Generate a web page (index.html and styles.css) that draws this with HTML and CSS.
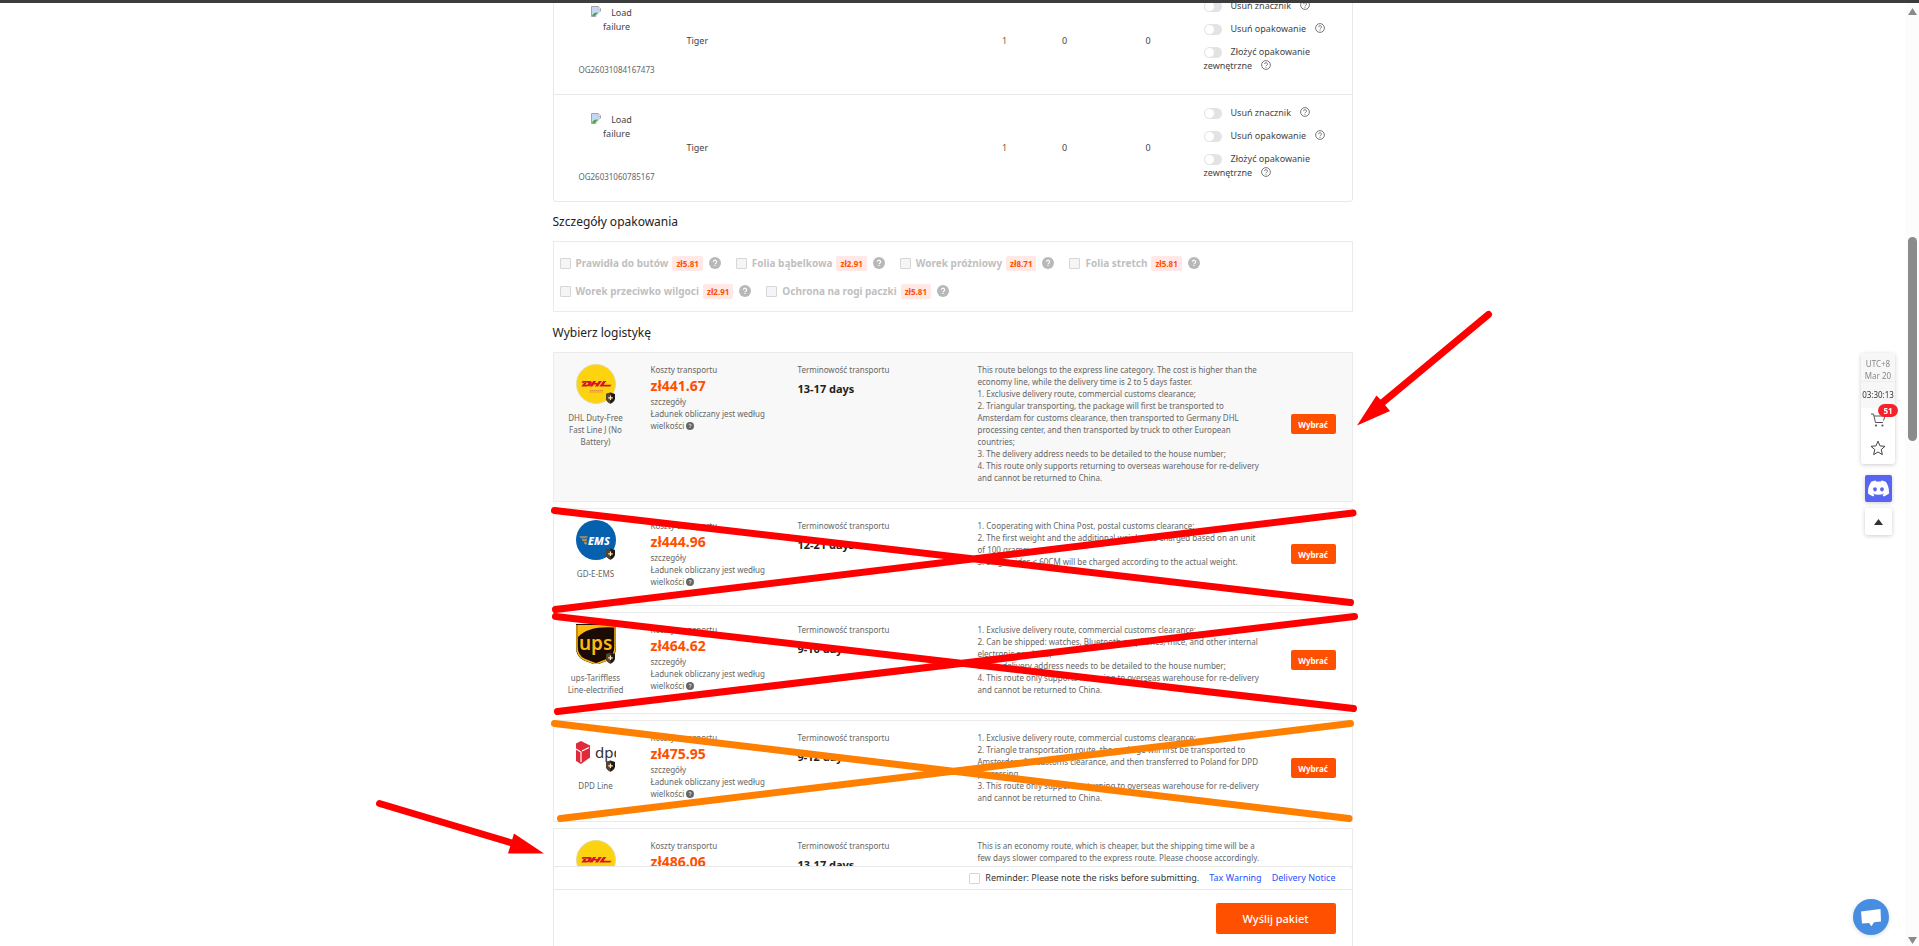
FILE: index.html
```
<!DOCTYPE html>
<html lang="pl">
<head>
  <meta charset="UTF-8" />
  <title>Wyślij pakiet</title>
  <link rel="stylesheet" href="styles.css">
</head>
<body>

<!-- shared icons -->
<svg class="sprite" aria-hidden="true">
  <symbol id="help" viewBox="0 0 10 10">
    <circle cx="5" cy="5" r="4.4" fill="none" stroke="#555" stroke-width="0.8" />
    <path d="M3.6 4.1a1.4 1.4 0 1 1 2.1 1.2c-.5.3-.7.5-.7 1M5 7v.8" fill="none" stroke="#555" stroke-width="0.8" />
  </symbol>
  <symbol id="help-full" viewBox="0 0 12 12">
    <circle cx="6" cy="6" r="6" fill="currentColor" />
    <path d="M4.4 4.8a1.6 1.6 0 1 1 2.4 1.4c-.6.3-.8.5-.8 1M6 8v1.1" fill="none" stroke="#fff" stroke-width="1.2" />
  </symbol>
  <symbol id="shield" viewBox="0 0 10 12">
    <path d="M5 0.5 9.5 2v4.200c0 2.600-2 4.300-4.500 5.500C2.500 10.500.5 8.800.5 6.200V2z" fill="#1d1a18" />
    <path d="M5 .5.5 2v4.200c0 2.600 2 4.300 4.500 5.500z" fill="#55452f" />
    <path d="M5 3.500v4.600M2.700 5.800h4.600" stroke="#ffe9bf" stroke-width="1.200" />
  </symbol>
  <symbol id="broken" viewBox="0 0 10 11">
    <path d="M.5.5h6.500l2.500 2.500v7.500h-9z" fill="#c6d6f5" stroke="#a5a5a5" />
    <path d="M7 0v3h3z" fill="#fff" stroke="#a5a5a5" stroke-width=".6" />
    <path d="M1 10c1-3 3.500-4 6-3.500L4 10z" fill="#4ba83a" />
    <path d="M10 5 4.500 11H10z" fill="#fff" />
  </symbol>
  <symbol id="dhl" viewBox="0 0 40 40">
    <circle cx="20" cy="20" r="19.500" fill="#fdd20f" stroke="#e3d9a0" />
    <g fill="#d8122d" transform="translate(0 17)">
      <path d="M6.500 0H14q2.500.2 1.500 2.700Q14.300 5.300 11 5.500H5.300L7.800 2h2.700L9.300 3.800h1.500q1-.2 1.400-1 .3-1-.7-1.100H5.500z" />
      <path d="M17.200 0h3.100l-1.400 2h2.500l1.400-2h3.100l-3.900 5.500h-3.100l1.500-2.100h-2.500l-1.500 2.100h-3.100z" />
      <path d="M27.200 0h3.100l-2.600 3.700h7.800l-1.300 1.800H23.300z" />
    </g>
    <path d="M14 26.500h13M13.500 28h13" stroke="#e28a3c" stroke-width="1" stroke-dasharray="1.500 .4" />
  </symbol>
</svg>

<div class="top-line"></div>

<main class="page">
  <table class="goods">
    <colgroup><col class="c-img"><col class="c-name"><col class="c-qty"><col class="c-qty"><col class="c-sum"><col class="c-opt"></colgroup>
    <tr>
      <td class="goods-img"><div class="thumb"><svg><use href="#broken" /></svg>Load failure</div><div class="order">OG26031084167473</div></td>
      <td class="goods-name">Tiger</td>
      <td class="brown">1</td>
      <td>0</td>
      <td>0</td>
      <td class="goods-opt">
        <div><label><input type="checkbox" class="switch">Usuń znacznik</label><svg class="q"><use href="#help" /></svg></div>
        <div><label><input type="checkbox" class="switch">Usuń opakowanie</label><svg class="q"><use href="#help" /></svg></div>
        <div><label><input type="checkbox" class="switch">Złożyć opakowanie zewnętrzne</label><svg class="q"><use href="#help" /></svg></div>
      </td>
    </tr>
    <tr>
      <td class="goods-img"><div class="thumb"><svg><use href="#broken" /></svg>Load failure</div><div class="order">OG26031060785167</div></td>
      <td class="goods-name">Tiger</td>
      <td class="brown">1</td>
      <td>0</td>
      <td>0</td>
      <td class="goods-opt">
        <div><label><input type="checkbox" class="switch">Usuń znacznik</label><svg class="q"><use href="#help" /></svg></div>
        <div><label><input type="checkbox" class="switch">Usuń opakowanie</label><svg class="q"><use href="#help" /></svg></div>
        <div><label><input type="checkbox" class="switch">Złożyć opakowanie zewnętrzne</label><svg class="q"><use href="#help" /></svg></div>
      </td>
    </tr>
  </table>

  <h2>Szczegóły opakowania</h2>
  <div class="packing">
    <div class="pack"><label><input type="checkbox" class="box" disabled>Prawidła do butów</label><b>zł5.81</b><svg><use href="#help-full" /></svg></div>
    <div class="pack"><label><input type="checkbox" class="box" disabled>Folia bąbelkowa</label><b>zł2.91</b><svg><use href="#help-full" /></svg></div>
    <div class="pack"><label><input type="checkbox" class="box" disabled>Worek próżniowy</label><b>zł8.71</b><svg><use href="#help-full" /></svg></div>
    <div class="pack"><label><input type="checkbox" class="box" disabled>Folia stretch</label><b>zł5.81</b><svg><use href="#help-full" /></svg></div>
    <div class="pack"><label><input type="checkbox" class="box" disabled>Worek przeciwko wilgoci</label><b>zł2.91</b><svg><use href="#help-full" /></svg></div>
    <div class="pack"><label><input type="checkbox" class="box" disabled>Ochrona na rogi paczki</label><b>zł5.81</b><svg><use href="#help-full" /></svg></div>
  </div>

  <h2>Wybierz logistykę</h2>
  <div class="lines">
    <div class="line active">
      <div class="carrier">
        <div class="logo"><svg><use href="#dhl" /></svg><svg class="shield"><use href="#shield" /></svg></div>
        DHL Duty-Free Fast Line J (No Battery)
      </div>
      <div class="cost">
        <div>Koszty transportu</div>
        <div class="price">zł441.67</div>
        <div>szczegóły</div>
        <div>Ładunek obliczany jest według wielkości <svg><use href="#help-full" /></svg></div>
      </div>
      <div class="time"><div>Terminowość transportu</div><div class="days">13-17 days</div></div>
      <div class="desc">
        <p>This route belongs to the express line category. The cost is higher than the economy line, while the delivery time is 2 to 5 days faster.</p>
        <p>1. Exclusive delivery route, commercial customs clearance;</p>
        <p>2. Triangular transporting, the package will first be transported to Amsterdam for customs clearance, then transported to Germany DHL processing center, and then transported by truck to other European countries;</p>
        <p>3. The delivery address needs to be detailed to the house number;</p>
        <p>4. This route only supports returning to overseas warehouse for re-delivery and cannot be returned to China.</p>
      </div>
      <button class="choose">Wybrać</button>
    </div>

    <div class="line">
      <div class="carrier">
        <div class="logo">
          <svg viewBox="0 0 40 40">
            <circle cx="20" cy="20" r="20" fill="#0560ae" />
            <path d="M3 16h9l-1.500 2.500H5zM6 19.500h5l-1 2H7.500zM8 22.500h3l-1 3z" fill="#8c8577" />
            <path d="M6 20h5M8 23h3" stroke="#f39b2d" stroke-width="1" />
            <text x="12" y="25" font-size="11" font-weight="800" font-style="italic" fill="#fff">EMS</text>
          </svg>
          <svg class="shield"><use href="#shield" /></svg>
        </div>
        GD-E-EMS
      </div>
      <div class="cost">
        <div>Koszty transportu</div>
        <div class="price">zł444.96</div>
        <div>szczegóły</div>
        <div>Ładunek obliczany jest według wielkości <svg><use href="#help-full" /></svg></div>
      </div>
      <div class="time"><div>Terminowość transportu</div><div class="days">12-21 days</div></div>
      <div class="desc">
        <p>1. Cooperating with China Post, postal customs clearance;</p>
        <p>2. The first weight and the additional weight are charged based on an unit of 100 grams;</p>
        <p>3. Single sides &lt; 60CM will be charged according to the actual weight.</p>
      </div>
      <button class="choose">Wybrać</button>
    </div>

    <div class="line">
      <div class="carrier">
        <div class="logo">
          <svg viewBox="0 0 40 40">
            <path d="M0 0h40v23q0 10-8 13.500L20 41 8 36.500Q0 33 0 23z" fill="#1c0a04" />
            <path d="M2 13Q12 2 38 3.500V1H2z" fill="#fdb913" />
            <path d="M1 1v22q0 9 7.500 12.500L20 40l11.500-4.500Q39 32 39 23V1" fill="none" stroke="#fdb913" stroke-width="1.500" />
            <text x="3" y="26" font-size="19" font-weight="600" fill="#fdb913">ups</text>
          </svg>
          <svg class="shield"><use href="#shield" /></svg>
        </div>
        ups-Tariffless Line-electrified
      </div>
      <div class="cost">
        <div>Koszty transportu</div>
        <div class="price">zł464.62</div>
        <div>szczegóły</div>
        <div>Ładunek obliczany jest według wielkości <svg><use href="#help-full" /></svg></div>
      </div>
      <div class="time"><div>Terminowość transportu</div><div class="days">9-16 days</div></div>
      <div class="desc">
        <p>1. Exclusive delivery route, commercial customs clearance;</p>
        <p>2. Can be shipped: watches, Bluetooth earphones, mice, and other internal electronic products;</p>
        <p>3. The delivery address needs to be detailed to the house number;</p>
        <p>4. This route only supports returning to overseas warehouse for re-delivery and cannot be returned to China.</p>
      </div>
      <button class="choose">Wybrać</button>
    </div>

    <div class="line">
      <div class="carrier">
        <div class="logo">
          <svg viewBox="0 0 40 40">
            <path d="M0 11.500 5 9l9 4.500v12L5 32l-5-3z" fill="#e02b3c" />
            <path d="M0 17l5 3v10M6 19l7-3.500" fill="none" stroke="#fff" stroke-width="1.200" />
            <text x="19" y="26" font-size="15" fill="#35312f">dpd</text>
          </svg>
          <svg class="shield"><use href="#shield" /></svg>
        </div>
        DPD Line
      </div>
      <div class="cost">
        <div>Koszty transportu</div>
        <div class="price">zł475.95</div>
        <div>szczegóły</div>
        <div>Ładunek obliczany jest według wielkości <svg><use href="#help-full" /></svg></div>
      </div>
      <div class="time"><div>Terminowość transportu</div><div class="days">9-12 days</div></div>
      <div class="desc">
        <p>1. Exclusive delivery route, commercial customs clearance;</p>
        <p>2. Triangle transportation route, the package will first be transported to Amsterdam for customs clearance, and then transferred to Poland for DPD processing.</p>
        <p>3. This route only supports returning to overseas warehouse for re-delivery and cannot be returned to China.</p>
      </div>
      <button class="choose">Wybrać</button>
    </div>

    <div class="line">
      <div class="carrier">
        <div class="logo"><svg><use href="#dhl" /></svg></div>
      </div>
      <div class="cost">
        <div>Koszty transportu</div>
        <div class="price">zł486.06</div>
      </div>
      <div class="time"><div>Terminowość transportu</div><div class="days">13-17 days</div></div>
      <div class="desc">
        <p>This is an economy route, which is cheaper, but the shipping time will be a few days slower compared to the express route. Please choose accordingly.</p>
      </div>
    </div>
  </div>

  <!-- hand drawn marks over the list -->
  <svg class="marks" viewBox="553 0 800 946" aria-hidden="true">
    <g stroke="#f00" stroke-width="7" stroke-linecap="round">
      <path d="M554.500 510.500 1350.500 602.500M1353 513 555.500 609.500" />
      <path d="M555.500 616.500 1353.500 708.500M1354.500 616.500 557.500 711.500" />
      <path d="M1488.500 314.500 1382 403M379.500 803.500 512 843" />
    </g>
    <path d="M554.500 723.500 1349 818.500M1350.500 723.500 560.500 818.500" stroke="#ff8000" stroke-width="7" stroke-linecap="round" />
    <path d="M1357 425.500 1376.500 395.500 1382 401 1385 405 1390 411zM544 853.500 514 833.500 508 853.500z" fill="#f00" />
  </svg>
</main>

<footer class="submit-bar">
  <div class="reminder">
    <label><input type="checkbox" class="box">Reminder: Please note the risks before submitting.</label>
    <a href="#">Tax Warning</a>
    <a href="#">Delivery Notice</a>
  </div>
  <div class="submit"><button>Wyślij pakiet</button></div>
</footer>

<aside class="side">
  <div class="side-card">
    <div class="zone">UTC+8<br>Mar 20</div>
    <div class="clock">03:30:13</div>
    <button class="cart" aria-label="Koszyk">
      <svg viewBox="0 0 16 16"><path d="M1 2h2.500l2 8.500h7.500M4 4h11l-1.500 4.500M7 10.500h6" fill="none" stroke="#555" /><circle cx="6" cy="13.500" r="1.100" fill="#555" /><circle cx="12.500" cy="13.500" r="1.100" fill="#555" /></svg>
      <span class="count">51</span>
    </button>
    <button class="star" aria-label="Ulubione">
      <svg viewBox="0 0 16 16"><path d="M8 1.200 10 5.900l5 .4-3.800 3.300 1.200 5L8 12l-4.400 2.600 1.200-5L1 6.300l5-.4z" fill="none" stroke="#444" stroke-linejoin="round" /></svg>
    </button>
  </div>
  <a href="#" class="discord" aria-label="Discord"><svg viewBox="0 0 24 24"><path fill="#fff" d="M20.317 4.370a19.800 19.800 0 0 0-4.885-1.515.074.074 0 0 0-.079.037c-.211.375-.445.865-.608 1.250-1.845-.276-3.680-.276-5.487 0-.164-.393-.406-.874-.618-1.250a.077.077 0 0 0-.079-.037 19.700 19.700 0 0 0-4.885 1.515.070.070 0 0 0-.032.028C.533 9.046-.319 13.580.099 18.058a.082.082 0 0 0 .031.056c2.053 1.508 4.041 2.423 5.993 3.030a.078.078 0 0 0 .084-.028c.462-.630.873-1.295 1.226-1.994a.076.076 0 0 0-.042-.106c-.653-.248-1.274-.550-1.872-.892a.077.077 0 0 1-.008-.128c.126-.094.252-.192.372-.291a.074.074 0 0 1 .078-.011c3.928 1.793 8.180 1.793 12.061 0a.074.074 0 0 1 .079.010c.120.099.246.198.373.292a.077.077 0 0 1-.007.128 12.300 12.300 0 0 1-1.873.891.077.077 0 0 0-.041.107c.360.698.772 1.363 1.225 1.993a.076.076 0 0 0 .084.029c1.961-.607 3.950-1.522 6.002-3.030a.077.077 0 0 0 .031-.055c.500-5.177-.838-9.674-3.549-13.660a.061.061 0 0 0-.031-.029zM8.020 15.331c-1.183 0-2.157-1.086-2.157-2.419s.956-2.419 2.157-2.419c1.211 0 2.176 1.095 2.157 2.419 0 1.333-.956 2.419-2.157 2.419zm7.975 0c-1.183 0-2.157-1.086-2.157-2.419s.955-2.419 2.157-2.419c1.211 0 2.176 1.095 2.157 2.419 0 1.333-.946 2.419-2.157 2.419z" /></svg></a>
  <button class="to-top" aria-label="Do góry"><svg viewBox="0 0 9 6"><path d="M0 6 4.500 0 9 6z" fill="#333" /></svg></button>
</aside>

<button class="chat" aria-label="Czat"><svg viewBox="0 0 36 36"><path d="M8 12.500 27.500 10l.5 12.500-7 .8-2.500 4-2.500-3.200-7 .4z" fill="#fff" /></svg></button>

<div class="scrollbar">
  <svg viewBox="0 0 9 7"><path d="M0 7 4.500 0 9 7z" fill="#8b8b8b" /></svg>
  <div class="thumb-bar"></div>
  <svg viewBox="0 0 9 7"><path d="M0 0h9L4.500 7z" fill="#8b8b8b" /></svg>
</div>

</body>
</html>
```
FILE: styles.css
```
* {
  box-sizing: border-box;
}
body {
  margin: 0;
  padding-right: 14px;
  height: 100vh;
  overflow: hidden;
  background: #fff;
  font-family: "Noto Sans", "Open Sans", sans-serif;
  font-size: 8px;
  line-height: 12px;
  color: #666;
}
button {
  font-family: inherit;
  border: none;
  padding: 0;
  cursor: pointer;
}
input {
  appearance: none;
  margin: 0;
}
a {
  color: #1f4fff;
  text-decoration: none;
}
.sprite {
  position: absolute;
  width: 0;
  height: 0;
}
.top-line {
  position: fixed;
  top: 0;
  left: 0;
  right: 0;
  height: 3px;
  background: #3c3c3c;
  z-index: 10;
}
.page {
  display: flow-root;
  position: relative;
  width: 800px;
  margin: 0 auto;
}

/* goods table, scrolled half way under the top line */
.goods {
  width: 100%;
  margin-top: -13px;
  table-layout: fixed;
  border: 1px solid #e8e8e8;
  border-radius: 3px;
  border-spacing: 0;
  font-size: 9px;
  line-height: 14px;
  color: #444;
  text-align: center;
}
.goods td {
  height: 106px;
  padding: 0;
}
.goods tr + tr td {
  height: 107px;
  border-top: 1px solid #e8e8e8;
}
.c-img { width: 126px; }
.c-qty { width: 60px; }
.c-sum { width: 107px; }
.c-opt { width: 150px; }
.goods .goods-name {
  text-align: left;
  padding-left: 7px;
}
.goods .brown {
  color: #8a5a3c;
}
.thumb {
  width: 52px;
  height: 52px;
  margin: 0 auto 6px;
}
.thumb svg {
  float: left;
  width: 10px;
  height: 11px;
}
.order {
  font-size: 8px;
  line-height: 12px;
  color: #666;
}
.goods .goods-opt {
  text-align: left;
  padding: 0 24px 10px 2px;
}
.goods-opt div + div {
  margin-top: 9px;
}
.switch {
  width: 18px;
  height: 11px;
  margin-right: 9px;
  border-radius: 6px;
  background: #e3e3e3;
  vertical-align: -3px;
}
.switch::before {
  content: "";
  display: block;
  width: 9px;
  height: 9px;
  margin: 1px;
  border-radius: 50%;
  background: #fff;
}
.q {
  width: 10px;
  height: 10px;
  margin-left: 9px;
  vertical-align: -1px;
}

h2 {
  margin: 0;
  font-size: 12px;
  line-height: 39px;
  font-weight: 400;
  color: #222;
}

.packing {
  display: flex;
  flex-wrap: wrap;
  column-gap: 15px;
  margin-bottom: 1px;
  padding: 7px 6px 6px;
  border: 1px solid #ebebeb;
}
.pack {
  display: flex;
  align-items: center;
  height: 28px;
}
.pack label {
  display: flex;
  align-items: center;
  font-size: 10px;
  font-weight: 700;
  color: #bfbfbf;
}
.box {
  width: 11px;
  height: 11px;
  margin-right: 5px;
  border: 1px solid #d6d6d6;
  border-radius: 1px;
  background: #fff;
}
.box:disabled {
  background: #f5f5f5;
}
.pack b {
  margin: 0 6px 0 4px;
  padding: 0 4px;
  line-height: 15px;
  border-radius: 2px;
  background: #ffe8e6;
  color: #ff5000;
}
.pack svg {
  width: 12px;
  height: 12px;
  color: #b8b8b8;
}

.lines {
  display: flex;
  flex-direction: column;
  gap: 6px;
}
.line {
  display: flex;
  padding: 11px 16px 17px 12px;
  border: 1px solid #ebebeb;
  background: #fff;
}
.line:last-child {
  min-height: 126px;
}
.line.active {
  background: #f8f8f8;
}
.carrier {
  width: 60px;
  margin-right: 25px;
  text-align: center;
}
.logo {
  position: relative;
  width: 40px;
  height: 40px;
  margin: 0 auto 8px;
}
.logo svg {
  display: block;
  width: 40px;
  height: 40px;
  overflow: hidden;
}
.logo .shield {
  position: absolute;
  right: 0;
  bottom: 0;
  width: 11px;
  height: 12px;
}
.cost {
  width: 124px;
  margin-right: 23px;
}
.price {
  font-size: 14px;
  line-height: 20px;
  font-weight: 700;
  color: #ff5000;
}
.cost svg {
  width: 8px;
  height: 8px;
  vertical-align: -1px;
}
.time {
  width: 180px;
}
.days {
  margin-top: 4px;
  font-size: 11px;
  line-height: 18px;
  font-weight: 700;
  color: #222;
}
.desc {
  width: 286px;
}
.desc p {
  margin: 0;
}
.choose {
  width: 45px;
  height: 20px;
  margin-left: auto;
  align-self: center;
  border-radius: 2px;
  background: #ff5000;
  color: #fff;
  font-size: 8px;
  font-weight: 700;
}

.marks {
  position: absolute;
  top: 0;
  left: 0;
  width: 800px;
  height: 946px;
  overflow: visible;
  fill: none;
  pointer-events: none;
}

.submit-bar {
  position: fixed;
  left: 0;
  right: 14px;
  bottom: 0;
  width: 800px;
  margin: 0 auto;
  border: 1px solid #e8e8e8;
  border-bottom: none;
  border-radius: 3px 3px 0 0;
  background: #fff;
}
.reminder {
  display: flex;
  justify-content: flex-end;
  align-items: center;
  gap: 10px;
  height: 23px;
  padding-right: 16px;
  border-bottom: 1px solid #e8e8e8;
  font-size: 9px;
  color: #333;
}
.reminder label {
  display: flex;
  align-items: center;
}
.submit {
  display: flex;
  justify-content: flex-end;
  padding: 13px 16px 12px;
}
.submit button {
  width: 120px;
  height: 31px;
  border-radius: 2px;
  background: #ff5000;
  color: #fff;
  font-size: 11px;
  font-weight: 500;
}

.side {
  position: fixed;
  top: 353px;
  right: 24px;
  width: 34px;
  display: flex;
  flex-direction: column;
  align-items: center;
}
.side-card {
  width: 34px;
  margin-bottom: 11px;
  border-radius: 3px;
  background: #fff;
  box-shadow: 0 1px 4px rgba(0, 0, 0, 0.2);
  text-align: center;
}
.side-card button {
  display: block;
  position: relative;
  width: 34px;
  background: none;
}
.zone {
  padding: 5px 0 0;
  height: 29px;
  border-bottom: 1px solid #eee;
  background: #f7f7f7;
  color: #888;
}
.clock {
  line-height: 26px;
  background: #f7f7f7;
  color: #333;
}
.cart {
  height: 28px;
}
.star {
  height: 28px;
}
.side-card svg {
  width: 16px;
  height: 16px;
}
.count {
  position: absolute;
  top: -4px;
  right: -3px;
  width: 20px;
  line-height: 13px;
  border-radius: 7px;
  background: #f5222d;
  color: #fff;
  font-size: 8px;
  font-weight: 700;
}
.discord,
.to-top {
  display: flex;
  align-items: center;
  justify-content: center;
  width: 27px;
  height: 27px;
  margin-bottom: 6px;
  border-radius: 2px;
  background: #fff;
  box-shadow: 0 1px 4px rgba(0, 0, 0, 0.2);
}
.discord {
  background: #5865f2;
}
.discord svg {
  width: 21px;
  height: 21px;
}
.to-top svg {
  width: 9px;
  height: 6px;
}
.chat {
  position: fixed;
  right: 30px;
  bottom: 11px;
  width: 36px;
  height: 36px;
  border-radius: 50%;
  background: #478ee3;
  box-shadow: 0 1px 4px rgba(0, 0, 0, 0.15);
}
.scrollbar {
  position: fixed;
  top: 3px;
  right: 0;
  bottom: 0;
  width: 14px;
  padding: 5px 2px 2px 3px;
  display: flex;
  flex-direction: column;
  background: #fcfcfc;
}
.scrollbar svg {
  width: 9px;
  height: 7px;
}
.thumb-bar {
  width: 9px;
  height: 204px;
  margin: 222px 0 auto;
  border-radius: 5px;
  background: #8b8b8b;
}
```
